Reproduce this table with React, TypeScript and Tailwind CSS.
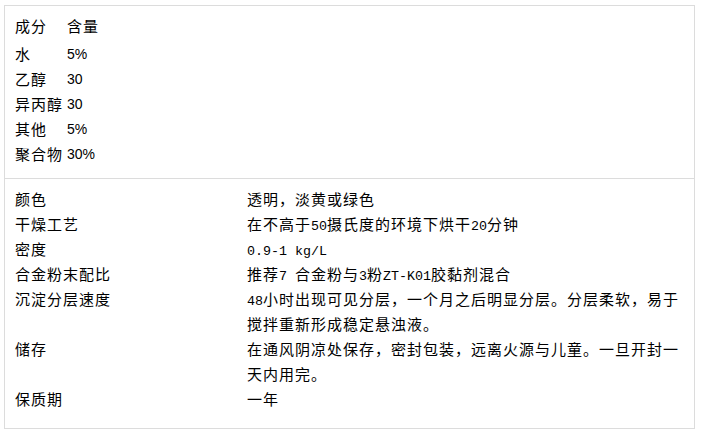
import React from "react";

const M = ({ children }: { children: React.ReactNode }) => (
  <span className="font-['Liberation_Mono',monospace] text-[13.33px] leading-none tracking-normal">{children}</span>
);

const N = ({ children }: { children: React.ReactNode }) => (
  <span className="font-['Liberation_Sans',sans-serif] text-[14px] leading-none tracking-normal">{children}</span>
);

const parts = [
  { name: "水", amount: "5%" },
  { name: "乙醇", amount: "30" },
  { name: "异丙醇", amount: "30" },
  { name: "其他", amount: "5%" },
  { name: "聚合物", amount: "30%" },
];

const specs: { label: string; value: React.ReactNode }[] = [
  { label: "颜色", value: "透明，淡黄或绿色" },
  { label: "干燥工艺", value: <>在不高于<M>50</M>摄氏度的环境下烘干<M>20</M>分钟</> },
  { label: "密度", value: <M>0.9-1 kg/L</M> },
  { label: "合金粉末配比", value: <>推荐<M>7 </M>合金粉与<M>3</M>粉<M>ZT-K01</M>胶黏剂混合</> },
  { label: "沉淀分层速度", value: <><M>48</M>小时出现可见分层，一个月之后明显分层。分层柔软，易于搅拌重新形成稳定悬浊液。</> },
  { label: "储存", value: "在通风阴凉处保存，密封包装，远离火源与儿童。一旦开封一天内用完。" },
  { label: "保质期", value: "一年" },
];

export default function App() {
  return (
    <div className="w-[701px] h-[438px] bg-white pt-[5px] pl-[4px] font-['Noto_Sans_CJK_SC',sans-serif] text-[15px] leading-[25px] tracking-[1px] text-black">
      <div className="w-[691px] border border-[#dcdcdc]">
        {/* 成分 */}
        <div className="pl-[10px] pt-[7px] pb-[12px]">
          <div className="flex h-[25px]">
            <span className="w-[52px]">成分</span>
            <span>含量</span>
          </div>
          <div className="mt-[3px]">
            {parts.map((p) => (
              <div key={p.name} className="flex h-[25px] items-center">
                <span className="w-[52px] whitespace-nowrap">{p.name}</span>
                <N>{p.amount}</N>
              </div>
            ))}
          </div>
        </div>

        {/* 参数 */}
        <div className="border-t border-[#dcdcdc] pl-[10px] pt-[7px] pb-[17px]">
          {specs.map((s) => (
            <div key={s.label} className="flex">
              <span className="w-[232px] shrink-0">{s.label}</span>
              <span className="w-[440px]">{s.value}</span>
            </div>
          ))}
        </div>
      </div>
    </div>
  );
}
